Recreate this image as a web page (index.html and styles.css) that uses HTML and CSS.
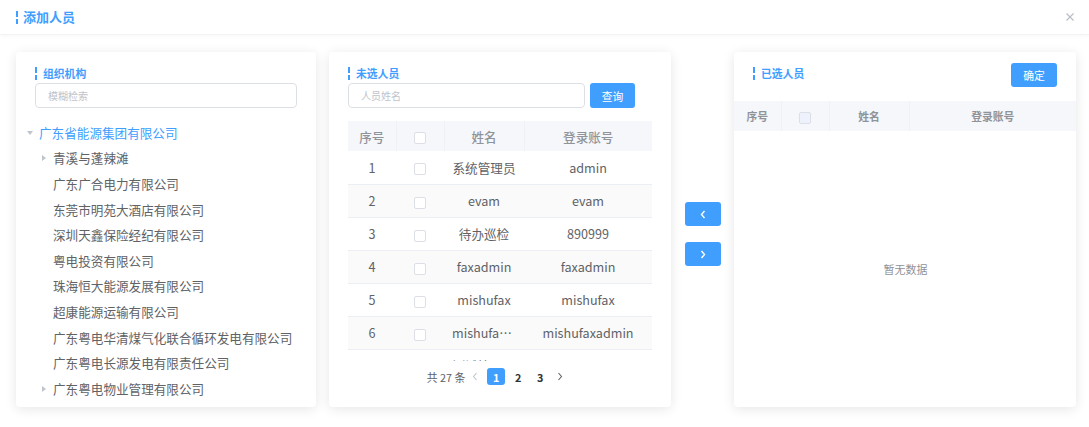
FILE: index.html
```html
<!DOCTYPE html>
<html lang="zh-CN">
<head>
<meta charset="utf-8">
<title>添加人员</title>
<link rel="stylesheet" href="styles.css">
</head>
<body>
<div class="dialog">
  <div class="dialog-header">
    <div class="dialog-title"><span class="bar"></span>添加人员</div>
    <span class="close">
      <svg width="8" height="8" viewBox="0 0 8 8"><path d="M0.5 0.5 L7.5 7.5 M7.5 0.5 L0.5 7.5" stroke="#b8bcc4" stroke-width="1.1" fill="none"/></svg>
    </span>
  </div>
  <div class="dialog-body">
    <section class="card card-org">
      <div class="card-title"><span class="bar bar-sm"></span>组织机构</div>
      <input class="input" type="text" placeholder="模糊检索">
      <ul class="tree">
        <li class="node node-root"><span class="caret caret-down"></span><span class="label">广东省能源集团有限公司</span></li>
        <li class="node node-child"><span class="caret caret-right"></span><span class="label">青溪与蓬辣滩</span></li>
        <li class="node node-child"><span class="caret"></span><span class="label">广东广合电力有限公司</span></li>
        <li class="node node-child"><span class="caret"></span><span class="label">东莞市明苑大酒店有限公司</span></li>
        <li class="node node-child"><span class="caret"></span><span class="label">深圳天鑫保险经纪有限公司</span></li>
        <li class="node node-child"><span class="caret"></span><span class="label">粤电投资有限公司</span></li>
        <li class="node node-child"><span class="caret"></span><span class="label">珠海恒大能源发展有限公司</span></li>
        <li class="node node-child"><span class="caret"></span><span class="label">超康能源运输有限公司</span></li>
        <li class="node node-child"><span class="caret"></span><span class="label">广东粤电华清煤气化联合循环发电有限公司</span></li>
        <li class="node node-child"><span class="caret"></span><span class="label">广东粤电长源发电有限责任公司</span></li>
        <li class="node node-child"><span class="caret caret-right"></span><span class="label">广东粤电物业管理有限公司</span></li>
      </ul>
    </section>

    <section class="card card-mid">
      <div class="card-title"><span class="bar bar-sm"></span>未选人员</div>
      <div class="search-row">
        <input class="input input-name" type="text" placeholder="人员姓名">
        <button class="btn btn-search" type="button">查询</button>
      </div>
      <table class="tbl tbl-mid">
        <colgroup><col class="c-idx"><col class="c-cb"><col class="c-name"><col class="c-acc"></colgroup>
        <thead>
          <tr><th>序号</th><th><span class="cb"></span></th><th>姓名</th><th>登录账号</th></tr>
        </thead>
      </table>
      <div class="tbody-wrap">
        <table class="tbl tbl-mid">
          <colgroup><col class="c-idx"><col class="c-cb"><col class="c-name"><col class="c-acc"></colgroup>
          <tbody>
            <tr><td>1</td><td><span class="cb"></span></td><td>系统管理员</td><td>admin</td></tr>
            <tr><td>2</td><td><span class="cb"></span></td><td>evam</td><td>evam</td></tr>
            <tr><td>3</td><td><span class="cb"></span></td><td>待办巡检</td><td>890999</td></tr>
            <tr><td>4</td><td><span class="cb"></span></td><td>faxadmin</td><td>faxadmin</td></tr>
            <tr><td>5</td><td><span class="cb"></span></td><td>mishufax</td><td>mishufax</td></tr>
            <tr><td>6</td><td><span class="cb"></span></td><td>mishufaxadmin</td><td>mishufaxadmin</td></tr>
            <tr><td>7</td><td><span class="cb"></span></td><td>测试管理员</td><td>ceshiadmin</td></tr>
          </tbody>
        </table>
      </div>
      <div class="pager">
        <span class="total">共 27 条</span>
        <span class="pg-arrow pg-prev"><svg width="6" height="9" viewBox="0 0 6 9"><path d="M4.5 1 L1.5 4.5 L4.5 8" stroke="#c0c4cc" stroke-width="1.1" fill="none"/></svg></span>
        <span class="pg pg-active">1</span>
        <span class="pg">2</span>
        <span class="pg pg-last">3</span>
        <span class="pg-arrow"><svg width="6" height="9" viewBox="0 0 6 9"><path d="M1.5 1 L4.5 4.5 L1.5 8" stroke="#606266" stroke-width="1.1" fill="none"/></svg></span>
      </div>
    </section>

    <div class="transfer">
      <button class="btn btn-arrow" type="button"><svg width="6" height="9" viewBox="0 0 6 9"><path d="M4.5 1 L1.5 4.5 L4.5 8" stroke="#fff" stroke-width="1.4" fill="none"/></svg></button>
      <button class="btn btn-arrow" type="button"><svg width="6" height="9" viewBox="0 0 6 9"><path d="M1.5 1 L4.5 4.5 L1.5 8" stroke="#fff" stroke-width="1.4" fill="none"/></svg></button>
    </div>

    <section class="card card-right">
      <div class="right-head">
        <div class="card-title card-title-right"><span class="bar bar-sm"></span>已选人员</div>
        <button class="btn btn-ok" type="button">确定</button>
      </div>
      <table class="tbl tbl-right">
        <colgroup><col class="r-idx"><col class="r-cb"><col class="r-name"><col class="r-acc"></colgroup>
        <thead>
          <tr><th>序号</th><th><span class="cb cb-disabled"></span></th><th>姓名</th><th>登录账号</th></tr>
        </thead>
      </table>
      <div class="empty">暂无数据</div>
    </section>
  </div>
</div>
</body>
</html>
```

FILE: styles.css
```css
* {
  box-sizing: border-box;
  margin: 0;
  padding: 0;
}

html, body {
  width: 1089px;
  height: 427px;
  overflow: hidden;
  background: #fff;
}

body {
  font-family: "Noto Sans CJK SC", "Noto Sans", sans-serif;
  color: #606266;
}

.dialog {
  width: 1089px;
  height: 427px;
  background: #fff;
}

.dialog-header {
  height: 35px;
  display: flex;
  align-items: center;
  justify-content: space-between;
  padding: 0 15px 0 16px;
  border-bottom: 1px solid #f3f3f3;
  box-shadow: 0 1px 4px rgba(0, 0, 0, 0.04);
}

.dialog-title {
  display: flex;
  align-items: center;
  height: 14px;
  font-size: 13px;
  line-height: 14px;
  font-weight: 700;
  color: #409eff;
}

.bar {
  display: inline-block;
  width: 2px;
  height: 13px;
  margin-right: 5px;
  background: linear-gradient(#409eff 0, #409eff 45%, transparent 45%, transparent 58%, #409eff 58%, #409eff 100%);
}

.bar-sm {
  margin-right: 6px;
}

.close {
  display: flex;
  width: 8px;
  height: 8px;
}

.dialog-body {
  display: flex;
  align-items: flex-start;
  padding: 17px 13px 0 16px;
}

.card {
  background: #fff;
  border-radius: 4px;
  box-shadow: 0 2px 12px rgba(0, 0, 0, 0.1);
  height: 355px;
  overflow: hidden;
}

.card-org {
  width: 300px;
  padding: 14px 19px 0;
  margin-right: 13px;
}

.card-mid {
  width: 342px;
  padding: 14px 19px 0;
}

.card-right {
  width: 342px;
}

.card-title {
  display: flex;
  align-items: center;
  height: 14px;
  font-size: 10.8px;
  line-height: 14px;
  font-weight: 600;
  color: #409eff;
}

.input {
  display: block;
  width: 100%;
  height: 25px;
  margin-top: 3px;
  padding: 0 12px;
  border: 1px solid #dcdfe6;
  border-radius: 4px;
  font-family: inherit;
  font-size: 10px;
  color: #606266;
  background: #fff;
  outline: none;
}

.input::placeholder {
  color: #c0c4cc;
}

/* tree */
.tree {
  list-style: none;
  margin: 12px 0 0 -11px;
}

.node {
  display: flex;
  align-items: center;
  height: 25.6px;
  font-size: 12.6px;
  line-height: 16px;
  color: #606266;
  white-space: nowrap;
}

.node-root .label {
  color: #409eff;
}

.node-child {
  padding-left: 14px;
}

.caret {
  display: flex;
  align-items: center;
  justify-content: center;
  width: 12px;
  height: 12px;
  margin-right: 3px;
  flex: none;
}

.caret-down::before {
  content: "";
  border-top: 4px solid #c0c4cc;
  border-left: 3px solid transparent;
  border-right: 3px solid transparent;
}

.caret-right::before {
  content: "";
  border-left: 4px solid #c0c4cc;
  border-top: 3.5px solid transparent;
  border-bottom: 3.5px solid transparent;
}

/* middle */
.search-row {
  display: flex;
  margin-top: 3px;
}

.input-name {
  width: 237px;
  margin-top: 0;
}

.btn {
  border: none;
  background: #409eff;
  color: #fff;
  border-radius: 3px;
  font-family: inherit;
  font-size: 10.8px;
  line-height: 14px;
  display: flex;
  align-items: center;
  justify-content: center;
}

.btn-search {
  width: 45px;
  height: 25px;
  margin-left: 5px;
}

.tbl {
  border-collapse: collapse;
  table-layout: fixed;
}

.tbl-mid {
  width: 304px;
}

.card-mid > .tbl-mid {
  margin-top: 13px;
}

.c-idx { width: 48px; }
.c-cb { width: 48px; }
.c-name { width: 80px; }
.c-acc { width: 128px; }

.tbl th {
  height: 30px;
  padding: 0;
  background: #f5f7fa;
  color: #909399;
  font-weight: 500;
  text-align: center;
  vertical-align: middle;
  border-right: 1px solid #eef1f6;
}

.tbl th:last-child {
  border-right: none;
}

.tbl-mid th {
  font-size: 12.6px;
}

.tbl-right th {
  font-size: 10.8px;
  font-weight: 600;
}

.tbody-wrap {
  height: 210px;
  overflow: hidden;
}

.tbl td {
  height: 33px;
  padding: 0 8px;
  font-size: 12.6px;
  color: #606266;
  text-align: center;
  vertical-align: middle;
  white-space: nowrap;
  overflow: hidden;
  text-overflow: ellipsis;
  border-bottom: 1px solid #ebeef5;
}

.tbl tbody tr:nth-child(even) td {
  background: #fafafa;
}

.cb {
  display: inline-block;
  width: 12px;
  height: 12px;
  border: 1px solid #dcdfe6;
  border-radius: 2px;
  background: #fff;
  vertical-align: middle;
}

.cb-disabled {
  background: #edf2fc;
}

.pager {
  display: flex;
  align-items: center;
  justify-content: center;
  height: 17px;
  margin-top: 7px;
  padding-right: 4px;
  font-size: 10.8px;
  color: #606266;
}

.total {
  margin-right: 1px;
}

.pg-arrow {
  display: flex;
  align-items: center;
  justify-content: center;
  width: 18px;
  height: 17px;
}

.pg-prev {
  margin-right: 3px;
}

.pg {
  display: flex;
  align-items: center;
  justify-content: center;
  width: 18px;
  height: 17px;
  margin-right: 4px;
  font-weight: 700;
  color: #303133;
  border-radius: 3px;
}

.pg-last {
  margin-right: 2px;
}

.pg-active {
  background: #409eff;
  color: #fff;
}

/* transfer buttons */
.transfer {
  width: 63px;
  display: flex;
  flex-direction: column;
  align-items: center;
  gap: 16px;
  padding-top: 150px;
}

.btn-arrow {
  width: 36px;
  height: 24px;
}

/* right */
.right-head {
  display: flex;
  justify-content: space-between;
  align-items: flex-start;
  padding: 11px 19px 0;
}

.card-title-right {
  margin-top: 3px;
}

.btn-ok {
  width: 46px;
  height: 24px;
}

.tbl-right {
  width: 342px;
  margin-top: 14px;
}

.r-idx { width: 47px; }
.r-cb { width: 48px; }
.r-name { width: 80px; }
.r-acc { width: 167px; }

.empty {
  height: 276px;
  display: flex;
  align-items: center;
  justify-content: center;
  font-size: 11px;
  color: #909399;
  padding-left: 1px;
}
```
